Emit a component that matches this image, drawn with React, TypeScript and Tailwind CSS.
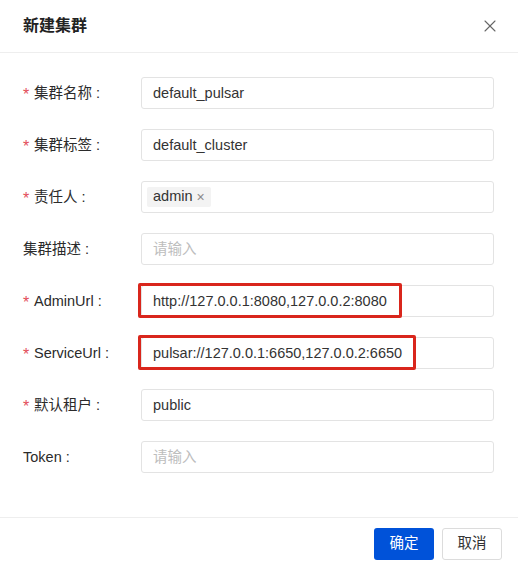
import { X } from "lucide-react";

type Field = {
	label: string;
	required?: boolean;
	value?: string;
	placeholder?: string;
	tag?: string;
	mark?: string;
};

const fields: Field[] = [
	{ label: "集群名称", required: true, value: "default_pulsar" },
	{ label: "集群标签", required: true, value: "default_cluster" },
	{ label: "责任人", required: true, tag: "admin" },
	{ label: "集群描述", placeholder: "请输入" },
	{
		label: "AdminUrl",
		required: true,
		value: "http://127.0.0.1:8080,127.0.0.2:8080",
		mark: "w-[264px]",
	},
	{
		label: "ServiceUrl",
		required: true,
		value: "pulsar://127.0.0.1:6650,127.0.0.2:6650",
		mark: "w-[278px]",
	},
	{ label: "默认租户", required: true, value: "public" },
	{ label: "Token", placeholder: "请输入" },
];

const FormRow = ({ field }: { field: Field }) => (
	<div className="flex items-center h-8">
		<div className="w-[118px] shrink-0 flex items-center pt-[2px] text-[14.5px] text-[#2b2b2b]">
			{field.required && (
				<span className="text-[#e34d59] w-[11px] text-[16px] leading-none pt-[2px]">*</span>
			)}
			<span>{field.label}</span>
			<span className="ml-[4px]">:</span>
		</div>
		<div className="relative flex-1 h-8">
			<div className="h-8 border border-[#e3e3e3] rounded-[3px] bg-white flex items-center pt-[2px] px-[11px] text-[14.5px]">
				{field.tag ? (
					<span className="-ml-[6px] -mt-[2px] h-5 px-[6px] bg-[#f3f3f3] rounded-[2px] flex items-center gap-[4px] text-[#333]">
						admin
						<span className="text-[#8a8a8a] text-[14px] leading-none">×</span>
					</span>
				) : field.value ? (
					<span className="text-[#333]">{field.value}</span>
				) : (
					<span className="text-[#bdbdbd]">{field.placeholder}</span>
				)}
			</div>
			{field.mark && (
				<div
					className={`absolute -left-[3px] -top-[2px] h-[35px] border-[3px] border-[#d9261c] rounded-[2px] ${field.mark}`}
				/>
			)}
		</div>
	</div>
);

export default function App() {
	return (
		<div
			className="w-[518px] h-[568px] bg-white flex flex-col"
			style={{ fontFamily: '"Liberation Sans", "Noto Sans CJK SC", sans-serif' }}
		>
			{/* Header */}
			<div className="h-[53px] shrink-0 border-b border-[#eeeeee] flex items-center justify-between pl-[23px] pr-[18px]">
				<span className="text-[16px] font-semibold text-[#222]">新建集群</span>
				<X className="w-5 h-5 text-[#666]" strokeWidth={1.3} />
			</div>

			{/* Form */}
			<div className="flex-1 flex flex-col gap-5 pt-6 pl-[23px] pr-6">
				{fields.map((f) => (
					<FormRow key={f.label} field={f} />
				))}
			</div>

			{/* Footer */}
			<div className="h-[51px] shrink-0 border-t border-[#eeeeee] flex items-start justify-end gap-2 pt-[10px] pr-[16px]">
				<button className="w-[60px] h-8 rounded-[3px] bg-[#0052d9] text-white text-[14.5px]">
					确定
				</button>
				<button className="w-[60px] h-8 rounded-[3px] border border-[#dcdcdc] bg-white text-[#333] text-[14.5px]">
					取消
				</button>
			</div>
		</div>
	);
}
